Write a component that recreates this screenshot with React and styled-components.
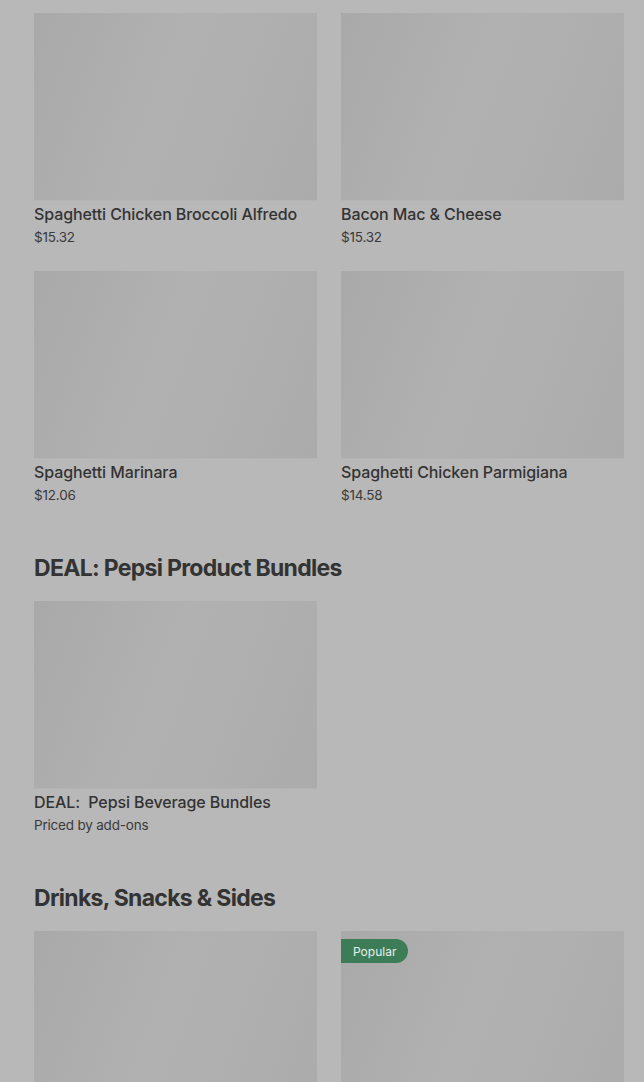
import React from "react";
import styled, { createGlobalStyle } from "styled-components";

const Global = createGlobalStyle`
  html, body { margin: 0; padding: 0; background: #b8b8b8; }
  body { font-family: Inter, "Liberation Sans", sans-serif; color: #333; }
  * { box-sizing: border-box; }
`;

const Page = styled.div`
  padding: 13px 20px 0 34px;
  height: 1082px;
  overflow: hidden;
  background: #b8b8b8;
`;

const Section = styled.section`
  padding-top: ${(p) => (p.$first ? "0" : "47px")};
`;

const Heading = styled.h2`
  margin: 0 0 17px;
  font-size: 23px;
  line-height: 32px;
  font-weight: 700;
  letter-spacing: -0.7px;
  color: #333;
`;

const Grid = styled.div`
  display: grid;
  grid-template-columns: 283px 283px;
  column-gap: 24px;
  row-gap: 24px;
`;

const Card = styled.div`
  position: relative;
  display: flex;
  flex-direction: column;
`;

const Thumb = styled.div`
  height: 188px;
  background: linear-gradient(110deg, #a9a9a9 0%, #b1b1b1 45%, #afafaf 70%, #ababab 100%);
  border-bottom: 1px solid #b4b4b4;
`;

const Title = styled.div`
  margin-top: 1px;
  font-size: 16px;
  line-height: 24px;
  font-weight: 500;
  color: #333;
  letter-spacing: -0.1px;
  white-space: nowrap;
`;

const Price = styled.div`
  margin-top: 1px;
  font-size: 13.5px;
  line-height: 20px;
  color: #3a3a3a;
  letter-spacing: -0.2px;
`;

const Badge = styled.span`
  position: absolute;
  top: 8px;
  left: 0;
  height: 24px;
  padding: 0 12px;
  display: inline-flex;
  align-items: center;
  background: #3c7d58;
  color: #e8efe9;
  font-size: 12px;
  border-radius: 0 12px 12px 0;
`;

function Item({ title, price, badge }) {
  return (
    <Card>
      <Thumb />
      {badge && <Badge>{badge}</Badge>}
      {title && <Title>{title}</Title>}
      {price && <Price>{price}</Price>}
    </Card>
  );
}

export default function App() {
  return (
    <>
      <Global />
      <Page>
        <Section $first>
          <Grid>
            <Item title="Spaghetti Chicken Broccoli Alfredo" price="$15.32" />
            <Item title="Bacon Mac & Cheese" price="$15.32" />
            <Item title="Spaghetti Marinara" price="$12.06" />
            <Item title="Spaghetti Chicken Parmigiana" price="$14.58" />
          </Grid>
        </Section>
        <Section>
          <Heading>DEAL: Pepsi Product Bundles</Heading>
          <Grid>
            <Item title={"DEAL:\u00a0 Pepsi Beverage Bundles"} price="Priced by add-ons" />
          </Grid>
        </Section>
        <Section>
          <Heading>Drinks, Snacks &amp; Sides</Heading>
          <Grid>
            <Item />
            <Item badge="Popular" />
          </Grid>
        </Section>
      </Page>
    </>
  );
}
